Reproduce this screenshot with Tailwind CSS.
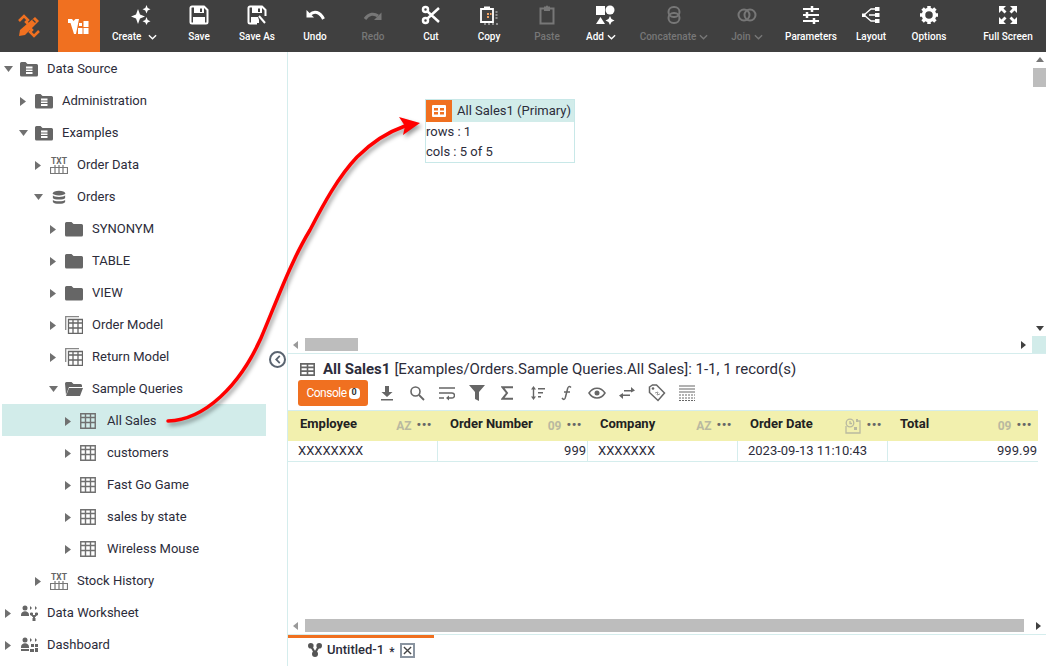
<!DOCTYPE html>
<html lang="en">
<head>
  <meta charset="UTF-8" />
  <title>Data Worksheet</title>
  <script src="https://cdn.jsdelivr.net/npm/@tailwindcss/browser@4"></script>
</head>
<body class="font-['Roboto',sans-serif] text-[13px] text-[#2c2c3a] bg-white">
<svg class="hidden">
  <symbol id="arrowR" viewBox="0 0 8 12"><path d="M0 0l8 6-8 6z" fill="#707070"/></symbol>
  <symbol id="arrowD" viewBox="0 0 12 8"><path d="M0 0h12L6 8z" fill="#707070"/></symbol>
  <symbol id="dbFolder" viewBox="0 0 18 16"><path d="M0 2.500a1.500 1.500 0 0 1 1.500-1.500h4l2 2h9a1.500 1.500 0 0 1 1.500 1.500v9.500a1.500 1.500 0 0 1-1.500 1.500h-15a1.500 1.500 0 0 1-1.500-1.500z" fill="#666"/><path d="M6 5.500h6.500v2H6zM6 8.500h6.500v1.500H6zM6 11h6.500v2H6z" fill="#fff"/></symbol>
  <symbol id="folder" viewBox="0 0 18 16"><path d="M0 2.500a1.500 1.500 0 0 1 1.500-1.500h5l2 2h8a1.500 1.500 0 0 1 1.500 1.500v9.500a1.500 1.500 0 0 1-1.500 1.500h-15a1.500 1.500 0 0 1-1.500-1.500z" fill="#666"/></symbol>
  <symbol id="folderOpen" viewBox="0 0 18 16"><path d="M0 2.500a1.500 1.500 0 0 1 1.500-1.500h5l2 2h7a1.500 1.500 0 0 1 1.500 1.500v1.500h-13l-3 8z" fill="#666"/><path d="M4 7h14l-3 8H1z" fill="#666"/></symbol>
  <symbol id="table" viewBox="0 0 16 16"><path d="M.750.750h14.500v14.500H.750zM.750 4.500h14.500M.750 9.500h14.500M5.500.750v14.500M10.500.750v14.500" fill="none" stroke="#707070" stroke-width="1.400"/></symbol>
  <symbol id="tableStack" viewBox="0 0 18 18"><path d="M.700 14V.700H14" fill="none" stroke="#888" stroke-width="1.300"/><path d="M3.500 3.500h14v14h-14zM3.500 7h14M3.500 12h14M8 3.500v14M13 3.500v14" fill="none" stroke="#666" stroke-width="1.300"/></symbol>
  <symbol id="txt" viewBox="0 0 18 18"><text x="9" y="7.500" text-anchor="middle" font-family="Roboto" font-weight="700" font-size="8.500" fill="#666">TXT</text><path d="M.500 11.500h17v6H.500zM5 9v8.500M9 9v8.500M13 9v8.500" fill="none" stroke="#777" stroke-width="1.200"/></symbol>
  <symbol id="db" viewBox="0 0 16 16"><ellipse cx="8" cy="3" rx="7" ry="2.800" fill="#666"/><path d="M1 5.500c1 2.500 13 2.500 14 0v3c-1 2.500-13 2.500-14 0zM1 10.500c1 2.500 13 2.500 14 0v2.500c-1 3-13 3-14 0z" fill="#666"/></symbol>
  <symbol id="ws" viewBox="0 0 18 16"><circle cx="5" cy="3" r="2.500" fill="#666"/><path d="M1 10c0-5 8-5 8 0v1H1z" fill="#666"/><path d="M10 1l2 2-2 2zM15 1l2 2-2 2z" fill="#666"/><path d="M10.500 8h2v2h-2zM15.500 8h2v2h-2zM13 13h2v3h-2zM11.500 10l2.500 3 2.500-3" fill="#666" stroke="#666"/></symbol>
  <symbol id="dash" viewBox="0 0 18 16"><circle cx="5" cy="3" r="2.500" fill="#666"/><path d="M1 10c0-5 8-5 8 0v1H1zM1 12h8v2H1z" fill="#666"/><path d="M10 1l2 2-2 2zM15 1l2 2-2 2z" fill="#666"/><path d="M11 7h3v3h-3zM15 7h3v3h-3zM15 11h3v4h-3zM10 12h4v3h-4z" fill="#666"/></symbol>
  <symbol id="chev" viewBox="0 0 10 6"><path d="M1 1l4 4 4-4" fill="none" stroke="currentColor" stroke-width="1.500"/></symbol>
</svg>

<div class="relative w-[1046px] h-[666px] overflow-hidden flex flex-col">
  <!-- top toolbar -->
  <header class="h-[52px] bg-[#404040] flex text-white text-[10px] font-medium shrink-0">
    <div class="w-[58px] flex items-center justify-center">
      <svg viewBox="0 0 24 24" class="w-[24px] h-[24px]"><g fill="none" stroke="#f07020" stroke-width="2.500"><path d="M2 7l5-5 4 4-2 2 2 2M22 17l-5 5-4-4 2-2-2-2"/></g><path d="M18 3l4 4L8 21l-6 1 1-6z" fill="#f07020"/><path d="M15.500 5.500l3 3" stroke="#404040" stroke-width="1.200"/></svg>
    </div>
    <div class="w-[42px] bg-[#f07020] flex items-center justify-center">
      <svg viewBox="0 0 22 22" class="w-[22px] h-[22px]"><path d="M0 4h4l1.500 2 2-2h3.500L8 19H6L2.500 8H0z" fill="#fff"/><path d="M11 8h3v3h-3zM15.500 6h5v6h-5zM10 13h4.500v6H10zM15.500 13h5v6h-5z" fill="#fff"/></svg>
    </div>
    <div class="w-[12px]"></div>

    <div class="w-[58px] flex flex-col items-center pt-[5px]">
      <svg viewBox="0 0 22 20" class="w-[22px] h-[20px]"><path d="M8 4l2 5.500 5 2-5 2L8 19l-2-5.500-5-2 5-2zM16.500 0l1.200 3 2.800 1.200-2.800 1.200-1.200 3-1.200-3-2.800-1.200 2.800-1.200zM16.500 12l1.200 3 2.800 1.200-2.800 1.200-1.200 2.600-1.200-2.600-2.800-1.200 2.800-1.200z" fill="#fff"/></svg>
      <div class="mt-[6px] self-start flex items-center gap-[7px] leading-[12px]">Create<svg class="w-[9px] h-[6px]"><use href="#chev"/></svg></div>
    </div>
    <div class="w-[58px] flex flex-col items-center pt-[5px]">
      <svg viewBox="0 0 20 20" class="w-[20px] h-[20px]"><path d="M3 1.500h12l3.500 3.500v12a1.500 1.500 0 0 1-1.500 1.500H3A1.500 1.500 0 0 1 1.500 17V3A1.500 1.500 0 0 1 3 1.500z" fill="none" stroke="#fff" stroke-width="2"/><path d="M5 2h10v6H5z" fill="#fff"/><path d="M11 3.500h2V7h-2z" fill="#404040"/><path d="M4 12h12v6H4z" fill="#fff"/></svg>
      <div class="mt-[6px] leading-[12px]">Save</div>
    </div>
    <div class="w-[58px] flex flex-col items-center pt-[5px]">
      <svg viewBox="0 0 20 20" class="w-[20px] h-[20px]"><path d="M10 18.500H3A1.500 1.500 0 0 1 1.500 17V3A1.500 1.500 0 0 1 3 1.500h12l3.500 3.500v6" fill="none" stroke="#fff" stroke-width="2"/><path d="M5 2h10v6H5z" fill="#fff"/><path d="M11 3.500h2V7h-2z" fill="#404040"/><path d="M4 12h7l1 3v3H4z" fill="#fff"/><path d="M12 11l6 7" stroke="#fff" stroke-width="2"/></svg>
      <div class="mt-[6px] leading-[12px]">Save As</div>
    </div>
    <div class="w-[58px] flex flex-col items-center pt-[5px]">
      <svg viewBox="0 0 20 20" class="w-[20px] h-[20px]"><path d="M5 9.500C9 5.500 15 6.500 18.500 14" fill="none" stroke="#fff" stroke-width="3"/><path d="M1.500 5v7.500H9z" fill="#fff"/></svg>
      <div class="mt-[6px] leading-[12px]">Undo</div>
    </div>
    <div class="w-[58px] flex flex-col items-center pt-[5px] text-[#777]">
      <svg viewBox="0 0 20 20" class="w-[20px] h-[20px]"><path d="M15 11C11 8 6 8.500 2 14" fill="none" stroke="#777" stroke-width="3"/><path d="M18.500 7.500V15H11z" fill="#777"/></svg>
      <div class="mt-[6px] leading-[12px]">Redo</div>
    </div>
    <div class="w-[58px] flex flex-col items-center pt-[5px]">
      <svg viewBox="0 0 20 20" class="w-[20px] h-[20px]"><g fill="none" stroke="#fff" stroke-width="2.500"><circle cx="4.500" cy="4.500" r="2.500"/><circle cx="4.500" cy="15.500" r="2.500"/><path d="M6.500 6.500L18 17M6.500 13.500L18 3"/></g></svg>
      <div class="mt-[6px] leading-[12px]">Cut</div>
    </div>
    <div class="w-[58px] flex flex-col items-center pt-[5px]">
      <svg viewBox="0 0 20 20" class="w-[20px] h-[20px]"><path d="M2 4h12v13H2z" fill="none" stroke="#fff" stroke-width="1.800"/><path d="M5 1.500h6V5H5z" fill="#fff"/><path d="M8 8h2v2H8zM11 8h1.500v2H11zM8 11h2v2H8z" fill="#f0a060"/><path d="M16.500 7h2M16.500 10h2M16.500 13h2M5 19h2M9 19h2M13 19h2M17 19h2" stroke="#ddd" stroke-width="1.200"/></svg>
      <div class="mt-[6px] leading-[12px]">Copy</div>
    </div>
    <div class="w-[58px] flex flex-col items-center pt-[5px] text-[#777]">
      <svg viewBox="0 0 20 20" class="w-[20px] h-[20px]"><path d="M3.500 3.500h13v15h-13z" fill="none" stroke="#777" stroke-width="2"/><path d="M7 1.500h2a1 1 0 0 1 2 0h2V6H7z" fill="#777"/></svg>
      <div class="mt-[6px] leading-[12px]">Paste</div>
    </div>
    <div class="w-[58px] flex flex-col items-center pt-[5px]">
      <svg viewBox="0 0 20 20" class="w-[20px] h-[20px]"><path d="M1 1h9v9H1z" fill="#fff"/><circle cx="15" cy="5" r="4.500" fill="#fff"/><path d="M5.500 12L10 19H1zM15 11l1.500 3 3 1.500-3 1.500-1.500 3-1.500-3-3-1.500 3-1.500z" fill="#fff"/></svg>
      <div class="mt-[6px] mr-[8px] flex items-center gap-[3px] leading-[12px]">Add<svg class="w-[9px] h-[6px]"><use href="#chev"/></svg></div>
    </div>
    <div class="w-[80px] flex flex-col items-center pt-[5px] text-[#777]">
      <svg viewBox="0 0 20 20" class="w-[20px] h-[20px]"><g fill="none" stroke="#777" stroke-width="2"><rect x="4.500" y="2" width="11" height="10" rx="5"/><rect x="4.500" y="8" width="11" height="10" rx="5"/></g></svg>
      <div class="mt-[6px] flex items-center gap-[3px] leading-[12px]">Concatenate<svg class="w-[9px] h-[6px]"><use href="#chev"/></svg></div>
    </div>
    <div class="w-[66px] flex flex-col items-center pt-[5px] text-[#777]">
      <svg viewBox="0 0 20 20" class="w-[20px] h-[20px]"><g fill="none" stroke="#777" stroke-width="2"><circle cx="7" cy="10" r="5.500"/><circle cx="13" cy="10" r="5.500"/></g></svg>
      <div class="mt-[6px] flex items-center gap-[3px] leading-[12px]">Join<svg class="w-[9px] h-[6px]"><use href="#chev"/></svg></div>
    </div>
    <div class="w-[62px] flex flex-col items-center pt-[5px]">
      <svg viewBox="0 0 20 20" class="w-[20px] h-[20px]"><path d="M2 4h16M2 10h16M2 16h16" stroke="#fff" stroke-width="2"/><path d="M11 1v6M6 7v6M13 13v6" stroke="#fff" stroke-width="2.500"/></svg>
      <div class="mt-[6px] leading-[12px]">Parameters</div>
    </div>
    <div class="w-[58px] flex flex-col items-center pt-[5px]">
      <svg viewBox="0 0 20 20" class="w-[20px] h-[20px]"><path d="M3 10l7-6h5M3 10l7 6h5M8 10h7" fill="none" stroke="#fff" stroke-width="1.300"/><path d="M1 8.500h3.500v3.500H1zM14 2h4.500v4H14zM14 8h4.500v4H14zM14 14h4.500v4H14z" fill="#fff"/></svg>
      <div class="mt-[6px] leading-[12px]">Layout</div>
    </div>
    <div class="w-[58px] flex flex-col items-center pt-[5px]">
      <svg viewBox="0 0 20 20" class="w-[20px] h-[20px]"><circle cx="10" cy="10" r="5.500" fill="none" stroke="#fff" stroke-width="3.500"/><path d="M10 1v4M10 15v4M1 10h4M15 10h4M3.600 3.600l3 3M13.400 13.400l3 3M3.600 16.400l3-3M13.400 6.600l3-3" stroke="#fff" stroke-width="3.500"/></svg>
      <div class="mt-[6px] leading-[12px]">Options</div>
    </div>
    <div class="w-[12px]"></div>
    <div class="w-[76px] flex flex-col items-center pt-[5px]">
      <svg viewBox="0 0 20 20" class="w-[20px] h-[20px]"><path d="M1 1h7L5.500 3.500l3 3-2 2-3-3L1 8zM19 1v7l-2.500-2.500-3 3-2-2 3-3L12 1zM1 19v-7l2.500 2.500 3-3 2 2-3 3L8 19zM19 19h-7l2.500-2.500-3-3 2-2 3 3L19 12z" fill="#fff"/></svg>
      <div class="mt-[6px] leading-[12px]">Full Screen</div>
    </div>
  </header>

  <main class="flex flex-1 min-h-0">
    <!-- tree -->
    <aside class="w-[288px] shrink-0 border-r border-[#d5eded]">
      <div class="h-8 pt-[2px] flex items-center pl-[4px]"><div class="w-[16px] flex"><svg class="w-[9px] h-[6px]"><use href="#arrowD"/></svg></div><svg class="w-[18px] h-[16px] mr-[9px]"><use href="#dbFolder"/></svg>Data Source</div>
      <div class="h-8 pt-[2px] flex items-center pl-[20px]"><div class="w-[15px] flex"><svg class="w-[6px] h-[9px]"><use href="#arrowR"/></svg></div><svg class="w-[18px] h-[16px] mr-[9px]"><use href="#dbFolder"/></svg>Administration</div>
      <div class="h-8 pt-[2px] flex items-center pl-[19px]"><div class="w-[16px] flex"><svg class="w-[9px] h-[6px]"><use href="#arrowD"/></svg></div><svg class="w-[18px] h-[16px] mr-[9px]"><use href="#dbFolder"/></svg>Examples</div>
      <div class="h-8 pt-[2px] flex items-center pl-[35px]"><div class="w-[15px] flex"><svg class="w-[6px] h-[9px]"><use href="#arrowR"/></svg></div><svg class="w-[18px] h-[18px] mr-[9px]"><use href="#txt"/></svg>Order Data</div>
      <div class="h-8 pt-[2px] flex items-center pl-[34px]"><div class="w-[18px] flex"><svg class="w-[9px] h-[6px]"><use href="#arrowD"/></svg></div><svg class="w-[14px] h-[15px] mr-[11px]"><use href="#db"/></svg>Orders</div>
      <div class="h-8 pt-[2px] flex items-center pl-[50px]"><div class="w-[15px] flex"><svg class="w-[6px] h-[9px]"><use href="#arrowR"/></svg></div><svg class="w-[18px] h-[16px] mr-[9px]"><use href="#folder"/></svg>SYNONYM</div>
      <div class="h-8 pt-[2px] flex items-center pl-[50px]"><div class="w-[15px] flex"><svg class="w-[6px] h-[9px]"><use href="#arrowR"/></svg></div><svg class="w-[18px] h-[16px] mr-[9px]"><use href="#folder"/></svg>TABLE</div>
      <div class="h-8 pt-[2px] flex items-center pl-[50px]"><div class="w-[15px] flex"><svg class="w-[6px] h-[9px]"><use href="#arrowR"/></svg></div><svg class="w-[18px] h-[16px] mr-[9px]"><use href="#folder"/></svg>VIEW</div>
      <div class="h-8 pt-[2px] flex items-center pl-[50px]"><div class="w-[15px] flex"><svg class="w-[6px] h-[9px]"><use href="#arrowR"/></svg></div><svg class="w-[18px] h-[18px] mr-[9px]"><use href="#tableStack"/></svg>Order Model</div>
      <div class="h-8 pt-[2px] flex items-center pl-[50px]"><div class="w-[15px] flex"><svg class="w-[6px] h-[9px]"><use href="#arrowR"/></svg></div><svg class="w-[18px] h-[18px] mr-[9px]"><use href="#tableStack"/></svg>Return Model</div>
      <div class="h-8 pt-[2px] flex items-center pl-[49px]"><div class="w-[16px] flex"><svg class="w-[9px] h-[6px]"><use href="#arrowD"/></svg></div><svg class="w-[18px] h-[16px] mr-[9px]"><use href="#folderOpen"/></svg>Sample Queries</div>
      <div class="h-8 pt-[2px] flex items-center ml-[2px] mr-[21px] pl-[63px] bg-[#d2ecea]"><div class="w-[15px] flex"><svg class="w-[6px] h-[9px]"><use href="#arrowR"/></svg></div><svg class="w-[16px] h-[16px] mr-[11px]"><use href="#table"/></svg>All Sales</div>
      <div class="h-8 pt-[2px] flex items-center pl-[65px]"><div class="w-[15px] flex"><svg class="w-[6px] h-[9px]"><use href="#arrowR"/></svg></div><svg class="w-[16px] h-[16px] mr-[11px]"><use href="#table"/></svg>customers</div>
      <div class="h-8 pt-[2px] flex items-center pl-[65px]"><div class="w-[15px] flex"><svg class="w-[6px] h-[9px]"><use href="#arrowR"/></svg></div><svg class="w-[16px] h-[16px] mr-[11px]"><use href="#table"/></svg>Fast Go Game</div>
      <div class="h-8 pt-[2px] flex items-center pl-[65px]"><div class="w-[15px] flex"><svg class="w-[6px] h-[9px]"><use href="#arrowR"/></svg></div><svg class="w-[16px] h-[16px] mr-[11px]"><use href="#table"/></svg>sales by state</div>
      <div class="h-8 pt-[2px] flex items-center pl-[65px]"><div class="w-[15px] flex"><svg class="w-[6px] h-[9px]"><use href="#arrowR"/></svg></div><svg class="w-[16px] h-[16px] mr-[11px]"><use href="#table"/></svg>Wireless Mouse</div>
      <div class="h-8 pt-[2px] flex items-center pl-[35px]"><div class="w-[15px] flex"><svg class="w-[6px] h-[9px]"><use href="#arrowR"/></svg></div><svg class="w-[18px] h-[18px] mr-[9px]"><use href="#txt"/></svg>Stock History</div>
      <div class="h-8 pt-[2px] flex items-center pl-[5px]"><div class="w-[15px] flex"><svg class="w-[6px] h-[9px]"><use href="#arrowR"/></svg></div><svg class="w-[18px] h-[16px] mr-[9px]"><use href="#ws"/></svg>Data Worksheet</div>
      <div class="h-8 pt-[2px] flex items-center pl-[5px]"><div class="w-[15px] flex"><svg class="w-[6px] h-[9px]"><use href="#arrowR"/></svg></div><svg class="w-[18px] h-[16px] mr-[9px]"><use href="#dash"/></svg>Dashboard</div>
    </aside>

    <section class="flex-1 min-w-0 flex flex-col">
      <!-- graph pane -->
      <div class="h-[302px] shrink-0 flex flex-col border-b border-[#d5eded]">
        <div class="flex-1 flex min-h-0">
          <div class="flex-1 relative">
            <div class="absolute left-[137px] top-[47px] w-[150px] h-[64px] border border-[#c8e8e8]">
              <div class="h-[22px] bg-[#d2ecea] flex items-center whitespace-nowrap">
                <div class="w-[26px] h-[22px] bg-[#f07020] flex items-center justify-center mr-[5px]">
                  <svg viewBox="0 0 14 12" class="w-[14px] h-[12px]"><path d="M1 0h12a1 1 0 0 1 1 1v10a1 1 0 0 1-1 1H1a1 1 0 0 1-1-1V1a1 1 0 0 1 1-1z" fill="#fff"/><path d="M2 3h4v2.500H2zM8 3h4v2.500H8zM2 7h4v2.500H2zM8 7h4v2.500H8z" fill="#f07020"/></svg>
                </div>
                All Sales1 (Primary)
              </div>
              <div class="leading-[20px]">rows : 1<br />cols : 5 of 5</div>
            </div>
          </div>
          <div class="w-[13px] flex flex-col items-center pt-[5px]">
            <svg viewBox="0 0 8 5" class="w-[8px] h-[5px]"><path d="M4 0l4 5H0z" fill="#777"/></svg>
            <div class="w-[13px] h-[19px] bg-[#bdbdbd] mt-[6px]"></div>
            <div class="flex-1"></div>
            <svg viewBox="0 0 8 5" class="w-[8px] h-[5px] mb-[5px]"><path d="M0 0h8L4 5z" fill="#404040"/></svg>
          </div>
        </div>
        <div class="h-[17px] shrink-0 flex items-center">
          <div class="w-[17px] pl-[5px]"><svg viewBox="0 0 5 8" class="w-[5px] h-[8px]"><path d="M5 0v8L0 4z" fill="#999"/></svg></div>
          <div class="w-[53px] h-[13px] bg-[#bdbdbd]"></div>
          <div class="flex-1"></div>
          <svg viewBox="0 0 5 8" class="w-[5px] h-[8px] mr-[6px]"><path d="M0 0v8l5-4z" fill="#404040"/></svg>
          <div class="w-[14px] h-[17px] bg-[#d2ecea]"></div>
        </div>
      </div>

      <!-- detail pane -->
      <div class="h-[56px] shrink-0 pl-[10px]">
        <div class="h-[26px] flex items-center text-[15px] whitespace-nowrap pt-[4px]">
          <svg viewBox="0 0 14 12" class="w-[15px] h-[13px] mr-[8px] ml-[2px]"><path d="M.750.750h12.500v10.500H.750zM.750 4h12.500M.750 7.500h12.500M7 .750v10.500" fill="none" stroke="#666" stroke-width="1.500"/></svg>
          <span class="font-bold mr-[4px]">All Sales1</span> [Examples/Orders.Sample Queries.All Sales]: 1-1, 1 record(s)
        </div>
        <div class="flex items-center h-[26px]">
          <div class="w-[70px] h-[26px] bg-[#f07020] rounded-[3px] text-white text-[12px] flex items-center justify-center gap-[2px] tracking-[-0.5px]">Console<span class="w-[11px] h-[11px] bg-white rounded-[4px] text-[#333] text-[9px] font-bold flex items-center justify-center tracking-normal">0</span></div>
          <div class="w-[4px]"></div>
          <div class="w-[30px] flex justify-center"><svg viewBox="0 0 16 16" class="w-[16px] h-[16px]"><path d="M6 1h4v6h3.500L8 12 2.500 7H6zM2 14h12v1.500H2z" fill="#666"/></svg></div>
          <div class="w-[30px] flex justify-center"><svg viewBox="0 0 16 16" class="w-[16px] h-[16px]"><circle cx="6.500" cy="6.500" r="4.500" fill="none" stroke="#666" stroke-width="1.600"/><path d="M10 10l5 5" stroke="#666" stroke-width="1.800"/></svg></div>
          <div class="w-[30px] flex justify-center"><svg viewBox="0 0 16 16" class="w-[16px] h-[16px]"><path d="M0 3h16M0 8h13a2.500 2.500 0 0 1 0 5H8M0 13h5" fill="none" stroke="#666" stroke-width="1.500"/><path d="M10 10.500v5L7 13z" fill="#666"/></svg></div>
          <div class="w-[30px] flex justify-center"><svg viewBox="0 0 16 18" class="w-[16px] h-[18px]"><path d="M0 1h16l-6 7v9l-4-2V8z" fill="#666"/></svg></div>
          <div class="w-[30px] flex justify-center"><svg viewBox="0 0 12 14" class="w-[12px] h-[14px]"><path d="M12 1.200H1.500L6 7l-4.500 5.800H12" fill="none" stroke="#666" stroke-width="2"/></svg></div>
          <div class="w-[30px] flex justify-center"><svg viewBox="0 0 16 16" class="w-[16px] h-[16px]"><path d="M4.500 1L7 4.500H5.200v7H7L4.500 15 2 11.500h1.800v-7H2zM9 3h7v1.500H9zM9 7h5v1.500H9zM9 11h3v1.500H9z" fill="#666"/></svg></div>
          <div class="w-[30px] flex justify-center"><svg viewBox="0 0 12 16" class="w-[12px] h-[16px]"><path d="M10 2.500C8 .500 7 2 6.500 4l-2 8C4 15 2.500 15 1 13M3 7h6" fill="none" stroke="#666" stroke-width="1.500"/></svg></div>
          <div class="w-[30px] flex justify-center"><svg viewBox="0 0 18 12" class="w-[18px] h-[12px]"><path d="M1 6c4-6.500 12-6.500 16 0-4 6.500-12 6.500-16 0z" fill="none" stroke="#666" stroke-width="1.500"/><circle cx="9" cy="6" r="2.500" fill="#666"/></svg></div>
          <div class="w-[30px] flex justify-center"><svg viewBox="0 0 16 12" class="w-[16px] h-[12px]"><path d="M5 3h7V0l4 3.500L12 5.500V4.500H5zM11 9H4v3L0 8.500 4 6v1.500h7z" fill="#666"/></svg></div>
          <div class="w-[30px] flex justify-center"><svg viewBox="0 0 18 18" class="w-[18px] h-[18px]"><path d="M1.500 3l3-2h4l8 8-6.500 7.500-8.500-8z" fill="none" stroke="#666" stroke-width="1.500"/><circle cx="5" cy="4.500" r="1.300" fill="#666"/><path d="M7 9l3-1-1 3 3-1" fill="none" stroke="#999"/></svg></div>
          <div class="w-[30px] flex justify-center"><svg viewBox="0 0 16 16" class="w-[16px] h-[16px]"><path d="M0 1h16M0 4h16M0 7h16" stroke="#666" stroke-width="1.200"/><path d="M0 10h16M0 13h16M0 15.500h16" stroke="#666" stroke-dasharray="2 1"/></svg></div>
        </div>
      </div>

      <!-- table -->
      <div class="flex-1 min-h-0 flex flex-col">
        <div class="w-[750px] grid grid-cols-5 border-t border-[#d5eded]">
          <div class="h-[30px] bg-[#f2f0ae] flex items-center pl-[12px] pr-[6px] font-bold text-[#222]"><span class="flex-1 pb-[4px]">Employee</span><span class="text-[#b9b9a0] text-[12px] mr-[5px]">AZ</span><span class="text-[#666] text-[13px] tracking-[0.5px] pb-[2px]">•••</span></div>
          <div class="h-[30px] bg-[#f2f0ae] flex items-center pl-[12px] pr-[6px] font-bold text-[#222]"><span class="flex-1 pb-[4px]">Order Number</span><span class="text-[#b9b9a0] text-[12px] mr-[5px]">09</span><span class="text-[#666] text-[13px] tracking-[0.5px] pb-[2px]">•••</span></div>
          <div class="h-[30px] bg-[#f2f0ae] flex items-center pl-[12px] pr-[6px] font-bold text-[#222]"><span class="flex-1 pb-[4px]">Company</span><span class="text-[#b9b9a0] text-[12px] mr-[5px]">AZ</span><span class="text-[#666] text-[13px] tracking-[0.5px] pb-[2px]">•••</span></div>
          <div class="h-[30px] bg-[#f2f0ae] flex items-center pl-[12px] pr-[6px] font-bold text-[#222]"><span class="flex-1 pb-[4px]">Order Date</span><svg viewBox="0 0 16 16" class="w-[16px] h-[16px] mr-[5px]"><circle cx="5" cy="5" r="3.800" fill="none" stroke="#b9b9a0" stroke-width="1.300"/><path d="M1 8v7h14V3h-4M5 3v2.500h2" fill="none" stroke="#b9b9a0" stroke-width="1.300"/><path d="M9 9h3v3H9zM11 1h2v3h-2z" fill="#b9b9a0"/></svg><span class="text-[#666] text-[13px] tracking-[0.5px] pb-[2px]">•••</span></div>
          <div class="h-[30px] bg-[#f2f0ae] flex items-center pl-[12px] pr-[6px] font-bold text-[#222]"><span class="flex-1 pb-[4px]">Total</span><span class="text-[#b9b9a0] text-[12px] mr-[5px]">09</span><span class="text-[#666] text-[13px] tracking-[0.5px] pb-[2px]">•••</span></div>
          <div class="h-[21px] flex items-center border-r border-b border-[#d5eded] pl-[10px]">XXXXXXXX</div>
          <div class="h-[21px] flex items-center justify-end border-r border-b border-[#d5eded] pr-[1px]">999</div>
          <div class="h-[21px] flex items-center border-r border-b border-[#d5eded] pl-[10px]">XXXXXXX</div>
          <div class="h-[21px] flex items-center border-r border-b border-[#d5eded] pl-[10px]">2023-09-13 11:10:43</div>
          <div class="h-[21px] flex items-center justify-end border-b border-[#d5eded] pr-[1px]">999.99</div>
        </div>
        <div class="flex-1"></div>
        <div class="h-[13px] flex items-center mb-[2px]">
          <div class="w-[17px] pl-[5px]"><svg viewBox="0 0 5 8" class="w-[5px] h-[8px]"><path d="M5 0v8L0 4z" fill="#999"/></svg></div>
          <div class="w-[719px] h-[13px] bg-[#bdbdbd]"></div>
          <div class="flex-1"></div>
          <svg viewBox="0 0 5 8" class="w-[5px] h-[8px] mr-[5px]"><path d="M0 0v8l5-4z" fill="#404040"/></svg>
        </div>
      </div>

      <!-- bottom tab -->
      <div class="h-[32px] shrink-0 border-t border-[#d5eded]">
        <div class="w-[146px] h-[3px] bg-[#f07020]"></div>
        <div class="flex items-center h-[24px] pl-[20px] font-medium">
          <svg viewBox="0 0 14 14" class="w-[14px] h-[14px] mr-[5px]"><path d="M3 3l4 7 4-7" fill="none" stroke="#555" stroke-width="2.200"/><circle cx="2.800" cy="2.800" r="2.800" fill="#555"/><circle cx="11.200" cy="2.800" r="2.800" fill="#555"/><circle cx="7" cy="11" r="3" fill="#555"/></svg>
          <span>Untitled-1</span><span class="ml-[5px] mr-[6px] text-[12px] mt-[4px]">*</span>
          <div class="w-[15px] h-[15px] border-2 border-[#8a94a0] flex items-center justify-center"><svg viewBox="0 0 10 10" class="w-[9px] h-[9px]"><path d="M1 1l8 8M9 1l-8 8" stroke="#444" stroke-width="1.500"/></svg></div>
        </div>
      </div>
    </section>
  </main>

  <!-- collapse toggle over the splitter -->
  <div class="absolute left-[269px] top-[351px] w-[17px] h-[17px] rounded-full border-2 border-[#5a6470] bg-white flex items-center justify-center">
    <svg viewBox="0 0 6 10" class="w-[6px] h-[9px]"><path d="M5 1L1 5l4 4" fill="none" stroke="#5a6470" stroke-width="2"/></svg>
  </div>

  <!-- red annotation arrow -->
  <svg class="absolute left-0 top-0 w-[1046px] h-[666px] pointer-events-none drop-shadow-[2px_3px_2px_rgba(0,0,0,0.4)]" viewBox="0 0 1046 666">
    <path d="M168 421C205 420 240 385 261 338C276 303 290 263 310 230C323 205 338 177 357 157C372 142 388 132 405 126" fill="none" stroke="#ff0000" stroke-width="3.500" stroke-linecap="round"/>
    <path d="M420 123L399 117L405 126L403 135z" fill="#ff0000"/>
  </svg>
</div>
</body>
</html>
